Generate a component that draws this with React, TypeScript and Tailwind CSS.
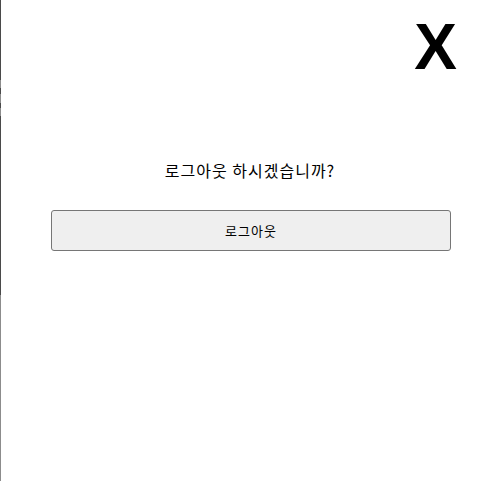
const segments = [
  { h: "h-[80px]", c: "bg-[#4a4a4a]" },
  { h: "h-[8px]", c: "bg-[#8c8c8c]" },
  { h: "h-[6px]", c: "bg-[#4a4a4a]" },
  { h: "h-[9px]", c: "bg-[#8c8c8c]" },
  { h: "h-[5px]", c: "bg-[#4a4a4a]" },
  { h: "h-[8px]", c: "bg-[#8c8c8c]" },
  { h: "h-[179px]", c: "bg-[#4a4a4a]" },
];

export default function App() {
  return (
    <div className="flex min-h-[481px] w-full bg-white">
      <div className="flex w-px flex-col">
        {segments.map((s, i) => (
          <div key={i} className={`${s.h} ${s.c}`} />
        ))}
        <div className="flex-1 bg-[#8c8c8c]" />
      </div>

      <div className="flex-1 font-['Noto_Sans_CJK_KR','Noto_Sans',sans-serif] text-black">
        <div className="flex justify-end pt-[15px] pr-[42px]">
          <button className="font-['Liberation_Sans',Arial,sans-serif] text-[64px] leading-none font-bold">
            X
          </button>
        </div>

        <p className="mt-[79px] text-center text-[16px] leading-6 tracking-[1px]">로그아웃 하시겠습니까?</p>

        <div className="mt-[28px] pr-[48px] pl-[50px]">
          <button className="h-[41px] w-full rounded-[3px] border border-[#767676] bg-[#efefef] text-[13px] tracking-[1px]">
            로그아웃
          </button>
        </div>
      </div>
    </div>
  );
}
